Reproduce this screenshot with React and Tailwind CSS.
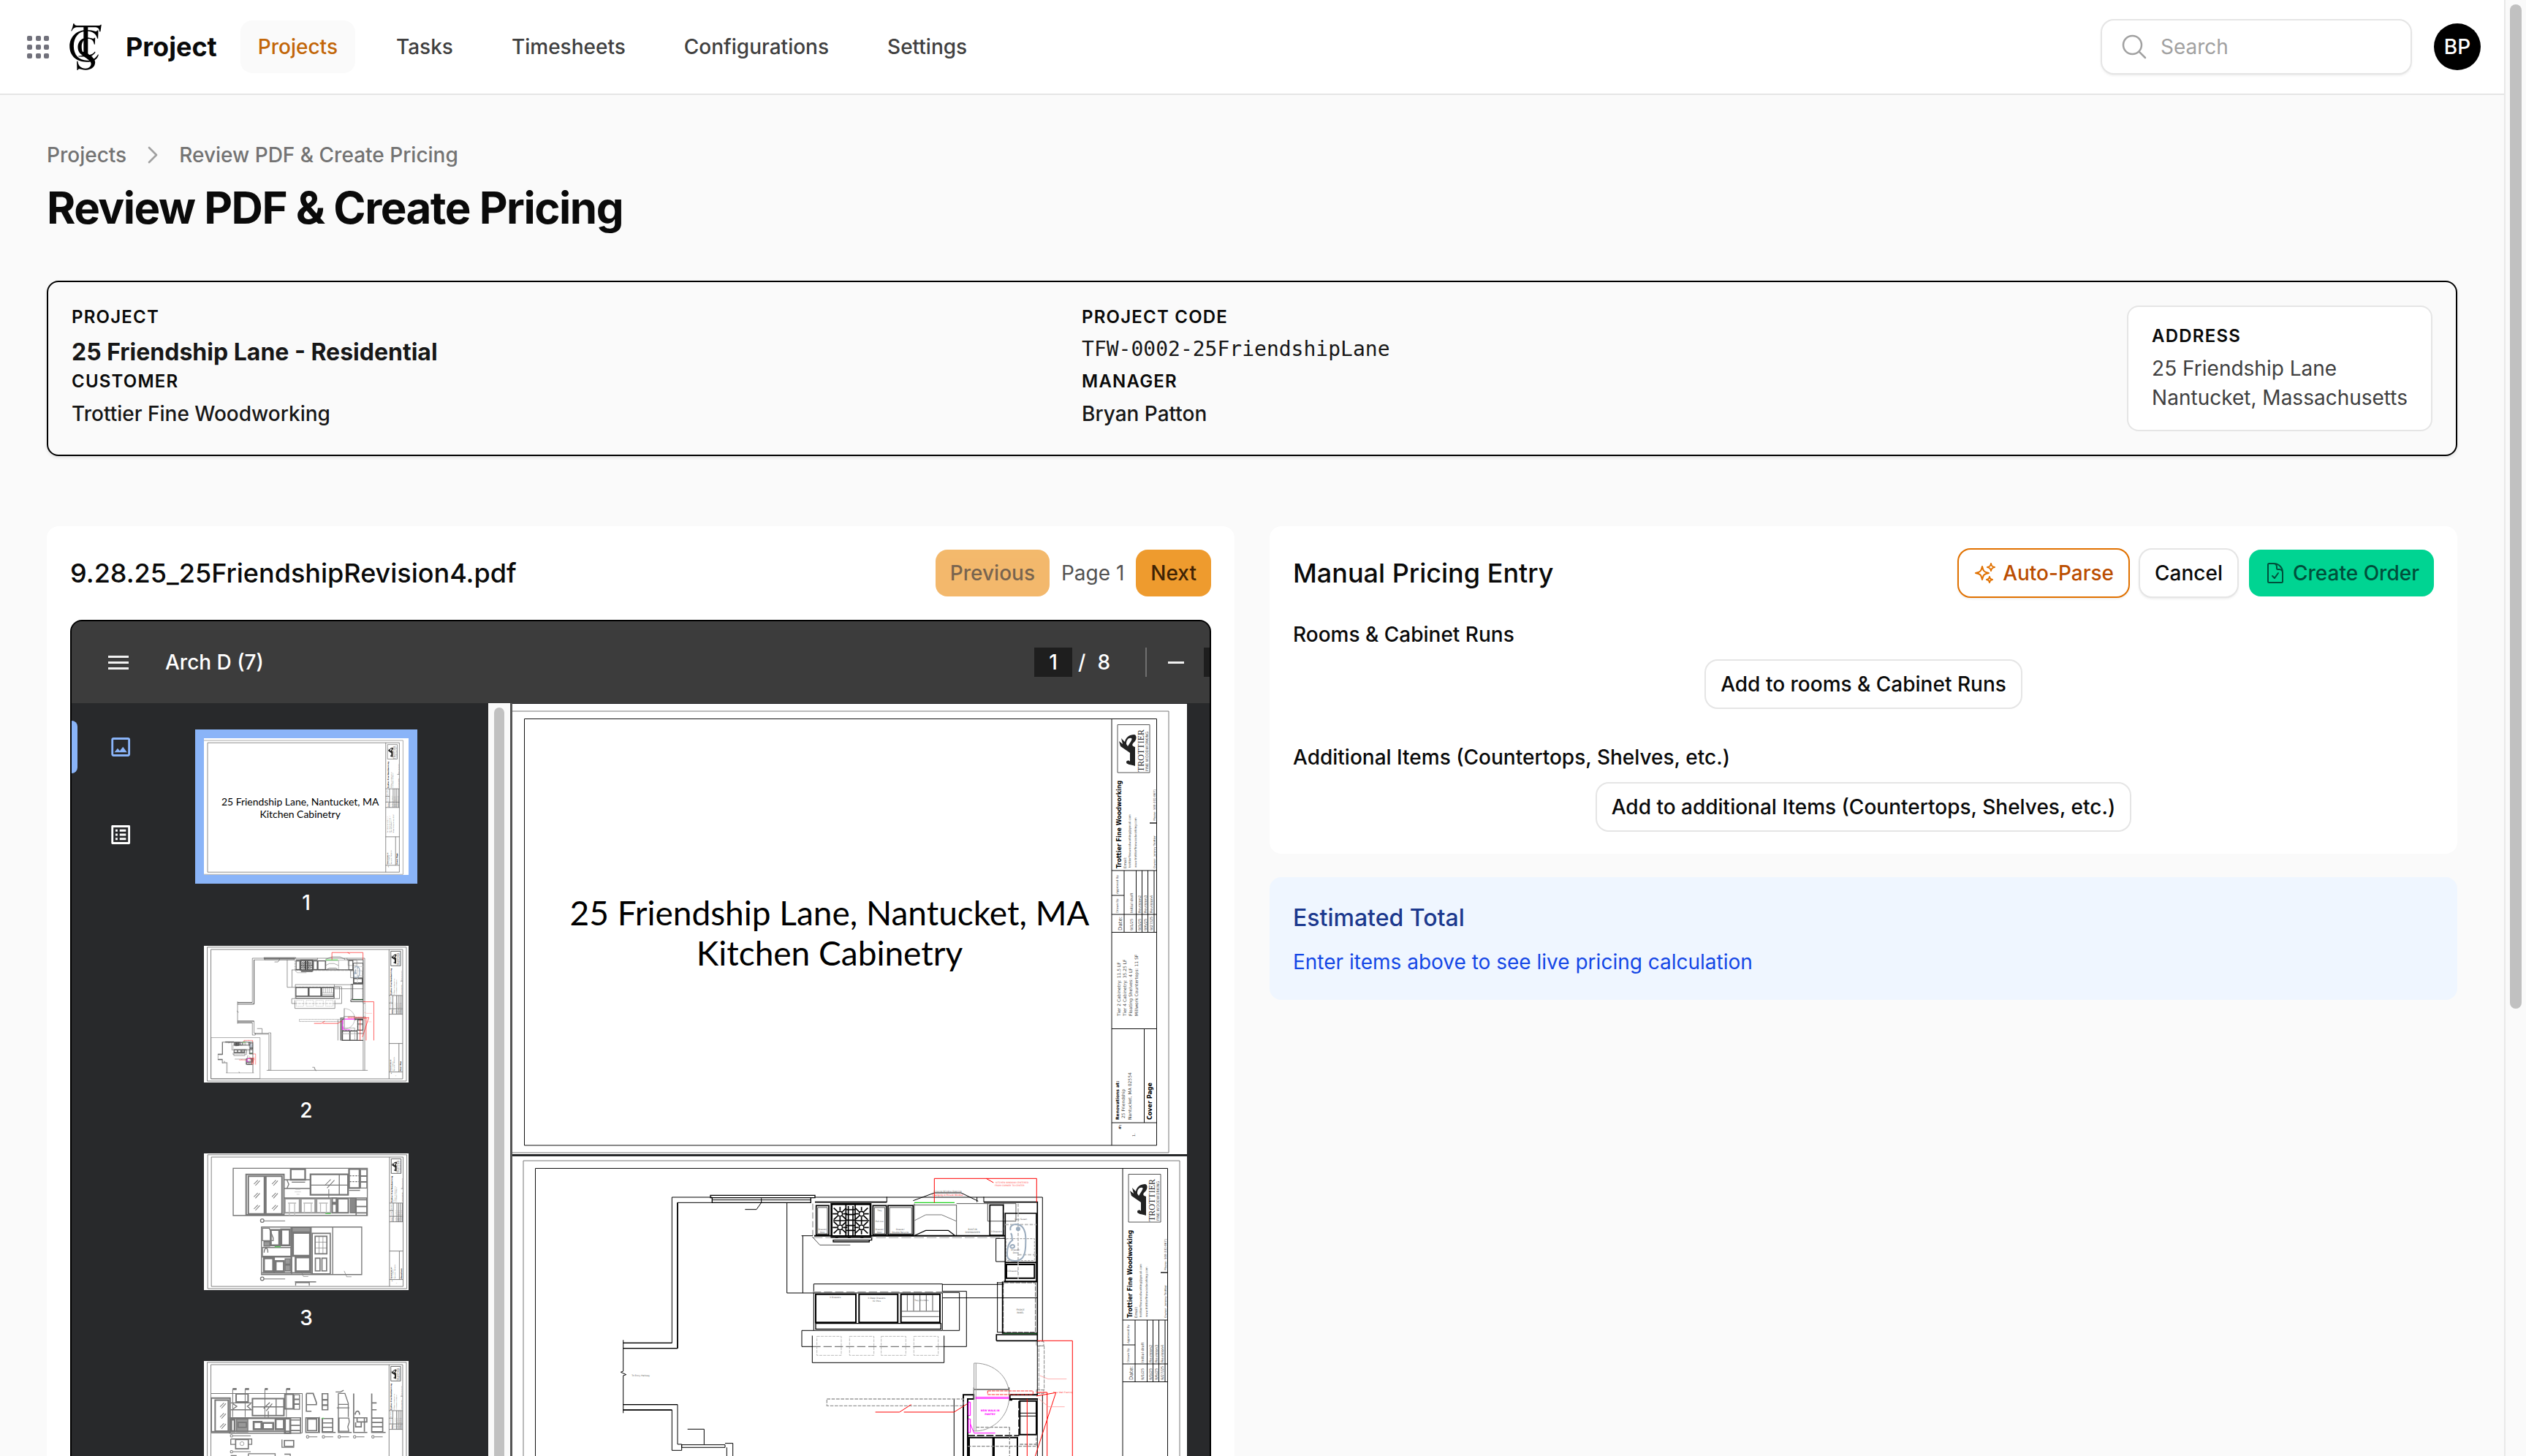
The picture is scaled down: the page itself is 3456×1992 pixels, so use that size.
import React from "react";
import {
  HiOutlineSparkles,
  HiOutlineDocumentCheck,
  HiOutlineMagnifyingGlass,
  HiOutlineChevronRight,
} from "react-icons/hi2";
import { MdOutlineImage, MdOutlineListAlt } from "react-icons/md";

const box = (x1, y1, x2, y2) => `M${x1} ${y1}H${x2}V${y2}H${x1}Z`;
const boxes = (list) => list.map((b) => box(b[0], b[1], b[2], b[3])).join("");

/* ---------- drawing sheets ---------- */

function Side({ x, y, size, bold, fill = "#444", children }) {
  return (
    <text
      transform={`translate(${x} ${y}) rotate(-90)`}
      fontSize={size}
      fontWeight={bold ? 700 : 400}
      fill={bold ? "#000" : fill}
      fontFamily='"DejaVu Sans", sans-serif'
    >
      {children}
    </text>
  );
}

function SheetFrame({ stroke, width, quantities, name, number }) {
  return (
    <g>
      <g fill="none" stroke={stroke} strokeWidth={width}>
        <path d="M701 973H1599V1577H701" stroke="#777" />
        <path d={box(717.5, 983.5, 1582.5, 1567)} />
        <path d="M1521 983.5V1567" />
        <path d="M1521 1191H1582.5M1521 1275.5H1582.5M1521 1407.5H1582.5M1521 1536H1582.5M1565.5 1407.5V1536" />
        <path d="M1521 1251H1582.5M1521 1225H1538M1538 1191V1275M1554.5 1191V1275M1562.5 1191V1275M1570.5 1191V1275M1579 1191V1275" />
        <path d={box(1529, 991.5, 1573, 1057)} stroke="#555" />
      </g>
      <path
        d="M1553 1048C1547 1046 1541 1046 1541 1043C1541 1040 1545 1040 1546 1042L1546 1030L1533 1021L1531 1014L1536 1018L1534 1010L1539 1015C1540 1009 1545 1005 1552 1005C1556 1006 1555 1013 1551 1016C1548 1019 1549 1021 1553 1022Z"
        fill="#222"
      />
      <path d="M1541 1018C1541 1012 1544 1009 1548 1010C1550 1011 1546 1016 1543 1021Z" fill="#fff" />
      <text
        transform="translate(1565 1056) rotate(-90)"
        fontSize="12"
        fontWeight="400"
        fill="#333"
        fontFamily='"Liberation Serif", serif'
      >
        TROTTIER
      </text>
      <Side x={1571} y={1055} size={5}>FINE WOODWORKING</Side>
      <Side x={1534} y={1188} size={8} bold>Trottier Fine Woodworking</Side>
      <Side x={1541} y={1188} size={5}>Email:</Side>
      <Side x={1547} y={1187} size={4}>trottierfinewoodworking@gmail.com</Side>
      <Side x={1555} y={1187} size={4}>www.trottierfinewoodworking.com</Side>
      <Side x={1581} y={1188} size={4}>Owner: Jeremy Trottier</Side>
      <Side x={1581} y={1123} size={4}>Phone: 508-332-8671</Side>
      <path d="M1573 1126H1582" stroke="#555" strokeWidth="2" />
      <Side x={1530} y={1249} size={4}>Drawn By:</Side>
      <Side x={1530} y={1223} size={4}>Approved By:</Side>
      <Side x={1535} y={1273} size={7}>Date:</Side>
      <Side x={1550} y={1273} size={5}>9/1/25</Side>
      <Side x={1550} y={1249} size={5}>Initial draft</Side>
      <Side x={1561} y={1273} size={5}>9/3/25</Side>
      <Side x={1561} y={1249} size={5}>Revision2</Side>
      <Side x={1569} y={1273} size={5}>9/6/25</Side>
      <Side x={1569} y={1249} size={5}>Revision3</Side>
      <Side x={1577} y={1273} size={5}>9/27/25</Side>
      <Side x={1577} y={1249} size={5}>Revision4</Side>
      {quantities && (
        <g>
          <Side x={1533} y={1390} size={6}>Tier 2 Cabinetry: 11.5 LF</Side>
          <Side x={1541} y={1390} size={6}>Tier 4 Cabinetry: 35.25 LF</Side>
          <Side x={1549} y={1390} size={6}>Floating Shelves: 4 LF</Side>
          <Side x={1557} y={1390} size={6}>Millwork Countertops: 11 SF</Side>
        </g>
      )}
      <Side x={1531} y={1532} size={6} bold>Renovations at:</Side>
      <Side x={1539} y={1530} size={6}>25 Friendship</Side>
      <Side x={1548} y={1532} size={6}>Nantucket, MA 02554</Side>
      <Side x={1576} y={1532} size={8} bold>{name}</Side>
      <Side x={1534} y={1545} size={5} bold>#:</Side>
      <Side x={1553} y={1555} size={5}>{number}</Side>
    </g>
  );
}

function CoverSheet({ width = 1, stroke = "#111" }) {
  return (
    <svg viewBox="701 963 923 616" className="block w-full bg-white" role="img" aria-label="Cover page">
      <SheetFrame stroke={stroke} width={width} quantities name="Cover Page" number="1." />
      <g fontFamily="Lato, sans-serif" fontSize="46" fontWeight="400" textAnchor="middle" fill="#000">
        <text x="1135" y="1266">25 Friendship Lane, Nantucket, MA</text>
        <text x="1135" y="1321">Kitchen Cabinetry</text>
      </g>
    </svg>
  );
}

function Burner({ x, y }) {
  return (
    <g stroke="#000" strokeWidth="5" fill="none">
      <circle cx={x} cy={y} r="10" />
      <path d={`M${x - 26} ${y - 24}L${x - 9} ${y - 8}M${x + 26} ${y - 24}L${x + 9} ${y - 8}M${x - 26} ${y + 24}L${x - 9} ${y + 8}M${x + 26} ${y + 24}L${x + 9} ${y + 8}`} />
      <path d={`M${x} ${y - 28}V${y - 13}M${x} ${y + 28}V${y + 13}M${x - 30} ${y}H${x - 13}M${x + 30} ${y}H${x + 13}`} />
    </g>
  );
}

function Note({ x, y, size = 9, fill = "#555", bold, children }) {
  return (
    <text x={x} y={y} fontSize={size} fill={fill} textAnchor="middle" fontWeight={bold ? 700 : 400} fontFamily='"DejaVu Sans", sans-serif'>
      {children}
    </text>
  );
}

/* Kitchen floor plan; one unit is a third of a sheet pixel. */
function FloorPlan({ ink = "#000", k = 1, notes }) {
  return (
    <g fill="none" stroke={ink} strokeWidth={3 * k}>
      {/* outer walls */}
      <path d="M-347 114H-512V712H-712M-712 734H-489V136H-347M75 114H1009V703M-712 700V828L-722 832L-700 842L-712 846V1000M-712 965H-489V1128M-712 987H-512V1153H-472V1128H-489" />
      <path d="M-489 136V734M75 134H370M768 134H988V703" strokeWidth={5 * k} />
      <path d="M-712 712H-512M-712 734H-489M-712 965H-489M-712 987H-512" strokeWidth={4 * k} />
      <path d={boxes([[-354, 106, 75, 116], [-347, 116, 58, 136]])} strokeWidth={4 * k} />
      <path d="M-347 125H58M-145 118V136L-165 164H-212" />
      <path d="M-472 1130H-294V1141H-472ZM-294 1124H-262V1631M-287 1141V1631M-380 1128V1066H-448" />
      <path d="M-318 1631H1050M-287 1620V1631M1009 925V1631M988 940V1631M350 1640L340 1615L330 1618V1590H300" />
      {/* back counter */}
      <path d="M66 140V272M849 140V272" strokeDasharray="26 10" stroke="#777" />
      <path d="M72 272H855" strokeWidth={6 * k} />
      <path d={boxes([[80, 148, 132, 268], [313, 148, 368, 268], [375, 148, 478, 268], [793, 146, 848, 270]])} strokeWidth={5 * k} />
      <path d={boxes([[86, 156, 126, 264], [319, 156, 362, 264], [381, 156, 472, 264]])} strokeWidth={2 * k} />
      <path d="M483 146H656V272M483 140V270M656 140H900V212H784V140" strokeWidth={2 * k} />
      <path d={box(143, 142, 303, 274)} fill="#fff" strokeWidth={8 * k} />
      <path d="M202 144V272M240 144V272M212 150V270M231 150V270M202 165H240M202 185H240M202 208H240M202 230H240M202 250H240M150 210H200M242 210H298" strokeWidth={5 * k} />
      <Burner x={178} y={182} />
      <Burner x={266} y={182} />
      <Burner x={178} y={238} />
      <Burner x={266} y={238} />
      <path d="M140 280H308V290H150V297H298V290" strokeWidth={4 * k} />
      <path d="M66 280H855" strokeDasharray="40 12" stroke="#777" strokeWidth={2 * k} />
      <path d="M64 276L95 310H220" strokeWidth={2 * k} />
      <path d="M370 112V134M768 112V134M740 114V134M478 128L565 96H675L745 130" />
      <path d="M483 210L530 186H595L655 212" stroke="#777" />
      <path d="M486 270L530 250H622L648 270" strokeWidth={4 * k} />
      <path d="M483 136H648" stroke="#1fd21f" strokeWidth={4 * k} />
      {/* dimensions */}
      <path d="M25 272V507M-40 136V507M-40 507H72M66 272H20M70 470V500M598 470H70M598 472H850M598 527H988M668 505V661M600 505H668M697 500V727M600 500H697M600 661H668M605 727H697M21 661V727H66M21 661H70M64 682V793H605V682M824 462V668M818 283V378M818 283H855M818 378H855M646 942V1226" />
      <path d="M598 470V505M822 465H850M822 668H850" />
      <path d="M64 727H604" strokeDasharray="34 12" strokeWidth={2 * k} />
      {/* island */}
      <path d={box(70, 507, 598, 661)} strokeWidth={3 * k} />
      <path d="M66 503H600" strokeDasharray="34 12" stroke="#777" />
      <path d={boxes([[78, 512, 243, 628], [256, 512, 415, 628], [428, 512, 588, 628]])} strokeWidth={6 * k} />
      <path d="M78 632H592V655H78Z" strokeWidth={4 * k} />
      <path d="M454 515V580M480 515V580M506 515V580M532 515V580M558 515V580M432 582H584M432 604H584" strokeWidth={2 * k} />
      <path d={boxes([[83, 685, 183, 763], [217, 685, 317, 763], [347, 685, 448, 763], [481, 685, 581, 763]])} stroke="#999" strokeWidth={2 * k} strokeDasharray="12 4" />
      {/* right run */}
      <path d={box(856, 180, 984, 460)} strokeWidth={5 * k} />
      <path d={box(861, 390, 976, 446)} strokeWidth={6 * k} />
      <path d={box(860, 284, 976, 374)} stroke="#999" strokeDasharray="10 4" />
      <path d="M856 382H984M850 460H988" strokeWidth={6 * k} />
      <path d="M909 140V450M856 226H984M909 350H984" stroke="#bbb" strokeDasharray="14 6" strokeWidth={5 * k} />
      <path d="M878 250C872 230 892 222 908 226C936 232 942 262 940 300C940 345 932 370 906 374C880 378 862 370 864 345C864 322 870 300 886 290C880 278 888 268 878 262M876 318C880 306 894 306 894 316C894 324 880 324 876 318" stroke="#9aabbd" strokeWidth={6 * k} />
      <circle cx="909" cy="244" r="9" fill="#9aabbd" stroke="none" />
      <path d="M848 465V668H980V465Z" strokeWidth={2 * k} strokeDasharray="20 4" />
      <path d="M845 460V672H988M820 678H988M820 703H988M820 676V703" strokeWidth={5 * k} />
      <path d="M848 674H988" stroke="#0b5d1b" strokeWidth={3 * k} />
      {/* door to the right */}
      <path d={boxes([[984, 706, 1014, 724], [994, 724, 1016, 905], [984, 905, 1014, 920]])} stroke="#888" strokeDasharray="16 4" />
      <path d="M988 703V925" strokeWidth={3 * k} />
      {/* pantry */}
      <path d="M684 1226V925H727V942H702V1226H990M875 925H990M875 942H990M875 925V946H885" strokeWidth={6 * k} />
      <path d="M702 1092H912M912 950V1100" strokeWidth={4 * k} strokeDasharray="30 8" />
      <path d={boxes([[916, 950, 984, 1088], [708, 1100, 806, 1226], [810, 1100, 906, 1226]])} strokeWidth={6 * k} />
      <path d="M916 1000H984M916 1012H984M727 903H872M727 895V925M872 895V925" strokeWidth={3 * k} />
      <path d="M702 1136H984V1090M916 1128H984M874 1058V1226M736 1058H874" stroke="#888" strokeDasharray="14 5" strokeWidth={4 * k} />
      <path d="M728 795H736V925M728 795V1074H736V925M736 795C810 797 872 850 872 925V942C868 1010 812 1070 736 1074" stroke="#999" />
      <path d={box(124, 942, 684, 970)} stroke="#999" strokeDasharray="14 5" strokeWidth={4 * k} />
      <path d="M734 935H872M734 940H872" stroke="#f0f" strokeWidth={3 * k} />
      <path d={boxes([[705, 955, 713, 1010], [705, 1024, 713, 1080]])} stroke="#f0f" />
      <path d="M713 1045L728 1082H815" stroke="#f0f" />
      {/* revision marks */}
      <path d="M565 136V37H985V134M778 37L808 54M988 703H1132V1226M984 915H1028V1226M946 942V1226M984 930L1064 916L978 1180M323 996H422L470 965M440 996H646L700 962" stroke="#f00" />
      <path d={box(784, 909, 970, 924)} stroke="#f33" strokeDasharray="14 3" />
      <path d="M998 846L1032 860H1108M992 940L1034 974H1100" stroke="#f88" strokeWidth={2 * k} />
      {notes && (
        <g stroke="none">
          <Note x={884} y={57} fill="#f55">KITCHEN WINDOW CENTERED</Note>
          <Note x={874} y={69} fill="#f55">FROM CORNER TO CENTER</Note>
          <Note x={620} y={93}>Existing Window Opening</Note>
          <Note x={620} y={107} fill="#f00">Changing to Picture Window</Note>
          <Note x={106} y={249}>Drawer/</Note>
          <Note x={106} y={261}>Door</Note>
          <Note x={340} y={172}>Tray</Note>
          <Note x={340} y={215}>Pull-out</Note>
          <Note x={340} y={249}>Drawer/</Note>
          <Note x={340} y={261}>Door</Note>
          <Note x={425} y={249}>Drawer/</Note>
          <Note x={425} y={261}>Double Recycle</Note>
          <Note x={722} y={249}>BUILT-IN</Note>
          <Note x={722} y={261}>DISHWASHER</Note>
          <Note x={820} y={257}>3 Drawers</Note>
          <Note x={920} y={208}>Lazy Susan</Note>
          <Note x={898} y={333}>Drawer/</Note>
          <Note x={898} y={345}>Door</Note>
          <Note x={886} y={420}>3 Drawers</Note>
          <Note x={158} y={528}>3 Drawers</Note>
          <Note x={328} y={530}>3 Deep Drawers</Note>
          <Note x={328} y={542}>for Pots</Note>
          <Note x={512} y={540}>Tray Dividers</Note>
          <Note x={918} y={580}>FRIDGE</Note>
          <Note x={918} y={592}>PANEL</Note>
          <Note x={794} y={993} size={10} fill="#f0f" bold>NEW WALK-IN</Note>
          <Note x={794} y={1007} size={10} fill="#f0f" bold>PANTRY</Note>
          <Note x={1094} y={919} fill="#f33">New Wall Framing</Note>
          <Note x={-640} y={850}>To Entry Hallway</Note>
        </g>
      )}
    </g>
  );
}

function PlanSheet({ thumb }) {
  const ink = thumb ? "#555" : "#000";
  return (
    <svg viewBox="701 963 923 616" className="block w-full bg-white" role="img" aria-label="Floor plan">
      <g transform="translate(15 -4)">
        <SheetFrame stroke={thumb ? "#777" : "#111"} width={thumb ? 3 : 1} name="Floor Plan" number="2." />
        <path d="M701 973V1577" stroke="#777" strokeWidth={thumb ? 3 : 1} />
      </g>
      <g transform="translate(1090 981) scale(0.3333)">
        <FloorPlan ink={ink} k={thumb ? 2 : 1} notes={!thumb} />
      </g>
      <path d={box(733, 1377, 954, 1562)} fill="none" stroke="#777" strokeWidth={thumb ? 2 : 1} />
      <g transform="translate(830 1386) scale(0.092)">
        <FloorPlan ink={ink} k={5} />
      </g>
    </svg>
  );
}

function glass(points) {
  return points
    .map(([x, y]) => `M${x} ${y + 16}L${x + 16} ${y}M${x + 6} ${y + 22}L${x + 24} ${y + 2}`)
    .join("");
}

function ElevationSheet() {
  return (
    <svg viewBox="701 963 923 616" className="block w-full bg-white" role="img" aria-label="Elevations">
      <g transform="translate(17 -4)">
        <SheetFrame stroke="#777" width={3} name="Elevations" number="3." />
        <path d="M701 973V1577" stroke="#777" strokeWidth="3" />
      </g>
      <g transform="translate(701 943) scale(1.1)" fill="none" stroke="#777" strokeWidth="4">
        <path d={box(120, 79, 670, 273)} />
        <path d={boxes([[173, 104, 328, 270], [182, 112, 248, 266], [254, 112, 320, 266]])} strokeWidth="6" />
        <path d={glass([[205, 128], [205, 180], [205, 230], [279, 128], [279, 180], [279, 230]])} strokeWidth="3" />
        <path d={boxes([[356, 83, 415, 126], [437, 104, 591, 188], [595, 82, 638, 160]])} strokeWidth="7" />
        <path d="M328 126H437M328 162H437M340 126L348 145L340 162M437 148H591M555 104V188M360 136H415M595 170H640" />
        <path d="M495 150L520 125M505 160L535 128M512 165V200" strokeWidth="3" />
        <path d="M597 110H636M597 134H636" strokeDasharray="8 4" />
        <path d={boxes([[642, 84, 668, 110], [642, 112, 668, 134], [642, 136, 668, 160]])} />
        <path d={boxes([[332, 204, 392, 262], [398, 204, 456, 262], [462, 204, 520, 262]])} stroke="#999" strokeWidth="6" />
        <path d="M345 222H378M350 222V273M372 222V273M408 222H446M412 222V262M440 222V262M472 222H508M478 222V262M502 222V262" stroke="#bbb" strokeWidth="4" />
        <path d={boxes([[549, 204, 592, 262], [526, 202, 543, 220], [526, 226, 543, 262]])} strokeWidth="6" />
        <path d={box(600, 202, 622, 262)} fill="#888" />
        <path d="M328 201H670M624 208H668M624 236H668M624 262H668M624 201V273M668 201V273" strokeWidth="5" />
        <path d="M498 265H520" stroke="#5c5" />
        <circle cx="239" cy="294" r="7" />
        <path d="M246 295H333" strokeWidth="3" />
        <path d="M375 166H395M372 176H398M380 186H392" stroke="#bbb" strokeWidth="2" />
        <path d={box(236, 320, 647, 515)} />
        <path d="M240 325H268L284 365V376H240ZM528 320V515M440 320V515M360 320V515M240 404H357V440H240ZM247 425C247 400 264 402 262 425" />
        <path d={boxes([[274, 332, 309, 395], [317, 330, 352, 395], [365, 344, 435, 438], [376, 444, 435, 502], [246, 448, 284, 502], [294, 460, 328, 502]])} strokeWidth="8" />
        <path d={boxes([[362, 322, 436, 340], [333, 450, 354, 472], [333, 476, 354, 500], [246, 380, 270, 398]])} fill="#999" />
        <path d="M238 442H360M238 508H440M288 442V508M358 320V510" strokeWidth="6" />
        <path d="M290 401H315" stroke="#5c5" />
        <path d={boxes([[444, 346, 518, 512], [456, 358, 504, 430], [457, 448, 476, 500], [484, 448, 503, 500]])} strokeWidth="5" />
        <path d="M472 358V430M488 358V430M456 382H504M456 406H504M575 500L586 525M400 505L408 523H428M586 524H605" strokeWidth="2" />
        <circle cx="239" cy="532" r="7" />
        <path d="M246 533H333" strokeWidth="3" />
        <path d="M373 545H460M376 548H432V560M376 548V560" strokeWidth="4" />
      </g>
    </svg>
  );
}

function SectionSheet() {
  return (
    <svg viewBox="701 963 923 616" className="block w-full bg-white" role="img" aria-label="Sections">
      <g transform="translate(15 -4)">
        <SheetFrame stroke="#777" width={3} name="Sections" number="4." />
        <path d="M701 973V1577" stroke="#777" strokeWidth="3" />
      </g>
      <g transform="translate(701 6) scale(1.1)" fill="none" stroke="#777" strokeWidth="4">
        <path d="M30 1003H403V1165M30 1165H403M118 985V1100M169 985V1100M250 985V1100M338 985V1100" strokeWidth="3" />
        <path d="M118 985H134M169 985H185M250 985H262M338 985H354" strokeWidth="8" />
        <path d={boxes([[30, 1022, 107, 1160], [46, 1030, 100, 1158], [132, 1005, 181, 1038], [199, 1024, 328, 1094], [332, 1006, 366, 1066]])} strokeWidth="6" />
        <path d={glass([[66, 1042], [66, 1084], [66, 1126]])} strokeWidth="3" />
        <path d="M110 1042H197M110 1070H197M118 1045L135 1056L118 1068M192 1045L178 1056L192 1068M199 1058H328M296 1024V1094M245 1065L270 1040M255 1075L280 1045M264 1075V1100" />
        <path d={boxes([[370, 1008, 392, 1026], [370, 1028, 392, 1046], [370, 1048, 392, 1068]])} />
        <path d={box(106, 1103, 396, 1166)} strokeWidth="5" />
        <path d={box(134, 1108, 180, 1160)} fill="#999" />
        <path d={boxes([[204, 1120, 236, 1150], [242, 1124, 284, 1150], [294, 1108, 328, 1150], [112, 1110, 126, 1158], [332, 1106, 354, 1166]])} strokeWidth="8" />
        <path d="M356 1112H394M356 1134H394M356 1155H394M140 1122H174V1142H140ZM110 1106H330M110 1158H354" strokeWidth="5" />
        <path d={boxes([[130, 1192, 182, 1230], [330, 1196, 368, 1220]])} strokeWidth="5" />
        <path d="M110 1190H196V1212H182M110 1190V1212H130M320 1192V1224H370M110 1258H134M182 1250H292V1260M330 1252H354V1260M182 1250V1260" />
        <circle cx="156" cy="1209" r="8" strokeWidth="2" />
        <path d="M420 1003H448L461 1040V1049H420M420 1003V1076H441M425 1108H462V1156H425ZM418 1103H470V1163H418ZM416 1163H476M473 1100V1165" strokeWidth="5" />
        <path d={boxes([[485, 1004, 508, 1028], [485, 1030, 508, 1050], [485, 1052, 508, 1070], [486, 1106, 528, 1160]])} strokeWidth="5" />
        <path d="M486 1124H528M486 1142H528M485 1104V1163H540" strokeWidth="5" />
        <path d="M551 1003V1163H606M540 997H560L573 990M551 1003H578L592 1044V1100M553 1048H592M545 1062H596M554 1104H594L596 1120L590 1140L594 1158H554Z" />
        <path d="M614 1003V1163H670M614 1103H658V1160M620 1090C622 1072 638 1070 638 1090M622 1122V1140H645V1118M628 1103H668V1120H628Z" strokeWidth="5" />
        <path d="M688 1003V1163H745M688 1042H708M688 1070H708M688 1104H733V1160H688ZM688 1122H733M688 1140H733" strokeWidth="5" />
        <path d="M484 1105H492" stroke="#5c5" />
        {[425, 490, 555, 618, 693].map((x) => (
          <g key={x} strokeWidth="3">
            <circle cx={x} cy="1181" r="5" />
            <path d={`M${x + 6} 1181H${x + 40}`} />
          </g>
        ))}
        {[1177, 1242].map((y) => (
          <g key={y} strokeWidth="3">
            <circle cx="113" cy={y} r="5" />
            <path d={`M119 ${y}H192`} />
          </g>
        ))}
      </g>
    </svg>
  );
}

/* ---------- header ---------- */

const NAV = ["Projects", "Tasks", "Timesheets", "Configurations", "Settings"];

/* Monogram mark: a crossbar and stem, two nested crescents and a hook. */
function Logo() {
  return (
    <svg viewBox="225 62 138 200" className="h-[66px] w-[46px]" role="img" aria-label="TCS" fill="#000">
      <path d="M237 97L234 96C240 85 242 75 243 66L247 66C248 72 252 74 258 74H345C352 74 356 73 357 70L360 70L356 99L352 99C351 86 345 81 330 81H304V190C304 197 308 199 322 200V203H265V200C280 199 286 197 286 190V81H262C248 81 242 86 237 97Z" />
      <path d="M346 128L343 128C338 108 322 97 298 97C266 97 245 122 245 160C245 196 268 219 300 219C322 219 336 210 346 193L348 195C344 214 325 225 298 225C255 225 228 198 228 160C228 120 258 92 298 92C312 92 326 95 336 98C340 98 342 97 343 94L347 94Z" />
      <path d="M333 152L330 152C327 135 318 129 304 129C286 129 278 143 278 163C278 184 288 196 305 196C318 196 326 192 333 182L335 184C330 196 318 202 302 202C278 202 262 186 262 163C262 140 279 124 302 124C310 124 318 126 324 128C328 128 330 127 330 125L334 125Z" />
      <path d="M262 222C263 240 275 252 294 252C308 252 317 244 317 232C317 214 280 208 278 185L296 180C302 196 334 204 334 226C334 246 318 258 295 258C283 258 274 255 268 254C265 254 263 256 262 259L259 259L258 222Z" />
    </svg>
  );
}

function Header() {
  return (
    <header className="flex h-32 shrink-0 items-center bg-white px-8 shadow-[0_2px_0_#e5e5e5]">
      <button type="button" aria-label="Apps" className="grid w-10 grid-cols-3 gap-[5px] p-[5px]">
        {Array.from({ length: 9 }, (_, i) => (
          <span key={i} className="size-[7px] rounded-[2px] bg-[#71717b]" />
        ))}
      </button>
      <a href="#home" className="ml-[22px] flex items-center gap-8">
        <Logo />
        <span className="text-[36px] leading-10 font-bold text-[#0a0a0a]">Project</span>
      </a>
      <nav className="ml-8 flex gap-8">
        {NAV.map((item, i) => (
          <a
            key={item}
            href={"#" + item.toLowerCase()}
            className={
              "rounded-2xl px-6 py-4 text-[28px] leading-10 font-medium " +
              (i === 0 ? "bg-[#fafafa] text-[#c26608]" : "text-[#404040]")
            }
          >
            {item}
          </a>
        ))}
      </nav>
      <label className="ml-auto flex h-[72px] w-[422px] items-center gap-4 rounded-2xl bg-white px-6 shadow-[0_2px_4px_rgba(0,0,0,0.15)] ring-2 ring-[#e5e5e5]">
        <HiOutlineMagnifyingGlass className="size-10 shrink-0 text-[#a1a1a1]" />
        <input
          type="text"
          aria-label="Search"
          placeholder="Search"
          className="min-w-0 flex-1 bg-transparent text-[28px] leading-10 outline-none placeholder:text-[#a1a1a1]"
        />
      </label>
      <button
        type="button"
        className="ml-8 flex size-16 items-center justify-center rounded-full bg-black text-[28px] font-medium text-white"
      >
        BP
      </button>
    </header>
  );
}

/* ---------- project summary ---------- */

function Field({ label, children }) {
  return (
    <div>
      <dt className="text-[24px] leading-8 font-semibold tracking-wider text-[#0a0a0a] uppercase">{label}</dt>
      <dd className="mt-2 text-[28px] leading-10 text-[#171717]">{children}</dd>
    </div>
  );
}

function Summary() {
  return (
    <section className="mt-16 flex items-start gap-12 rounded-2xl border-2 border-black p-8 shadow-[0_2px_4px_rgba(0,0,0,0.1)]">
      <dl className="grid flex-1 grid-cols-2">
        <Field label="Project">
          <span className="block text-[32px] leading-[48px] font-bold">25 Friendship Lane - Residential</span>
        </Field>
        <Field label="Project Code">
          <span className="block font-['DejaVu_Sans_Mono',monospace]">TFW-0002-25FriendshipLane</span>
        </Field>
        <Field label="Customer">
          <span className="font-medium">Trottier Fine Woodworking</span>
        </Field>
        <Field label="Manager">
          <span className="font-medium">Bryan Patton</span>
        </Field>
      </dl>
      <address className="rounded-2xl border-2 border-[#e5e5e5] bg-white px-8 py-6 not-italic">
        <h2 className="text-[24px] leading-8 font-semibold tracking-wider text-[#0a0a0a] uppercase">Address</h2>
        <p className="mt-2 text-[28px] leading-10 text-[#404040]">
          25 Friendship Lane
          <br />
          Nantucket, Massachusetts
        </p>
      </address>
    </section>
  );
}

/* ---------- PDF viewer ---------- */

const THUMBS = [
  { n: 1, art: <CoverSheet width={2} stroke="#444" /> },
  { n: 2, art: <PlanSheet thumb /> },
  { n: 3, art: <ElevationSheet /> },
  { n: 4, art: <SectionSheet /> },
];

function PdfViewer() {
  return (
    <div className="mt-8 flex h-[1400px] flex-col overflow-hidden rounded-2xl border-2 border-black bg-[#28292b] font-medium text-white">
      <div className="flex h-28 shrink-0 items-center bg-[#3c3c3c] pl-[50px] text-[28px] leading-10">
        <button type="button" aria-label="Menu" className="mr-[50px] flex w-7 flex-col gap-[5px]">
          <span className="h-[3px] bg-[#f1f1f1]" />
          <span className="h-[3px] bg-[#f1f1f1]" />
          <span className="h-[3px] bg-[#f1f1f1]" />
        </button>
        <span>Arch D (7)</span>
        <input
          type="text"
          aria-label="Page number"
          defaultValue="1"
          className="ml-auto h-10 w-[52px] bg-[#1e1e1e] text-center outline-none"
        />
        <span className="ml-2">/</span>
        <span className="ml-4">8</span>
        <span className="ml-12 h-10 w-0.5 bg-[#6f6f6f]" />
        <button type="button" aria-label="Zoom out" className="ml-[26px] flex h-10 w-7 items-center justify-center">
          <span className="h-[3px] w-[22px] bg-[#f1f1f1]" />
        </button>
        <span className="ml-6 h-10 w-2 bg-[#1e1e1e]" />
      </div>
      <div className="flex min-h-0 flex-1">
        <div className="flex w-[570px] shrink-0">
          <div className="flex w-[84px] flex-col gap-12 pt-6">
            <button type="button" aria-label="Thumbnails" className="flex h-[72px] items-center gap-[42px] text-[#8ab4f8]">
              <span className="h-full w-2 rounded-r-lg bg-[#8ab4f8]" />
              <MdOutlineImage className="size-9" />
            </button>
            <button type="button" aria-label="Document outline" className="flex h-[72px] items-center gap-[42px]">
              <span className="h-full w-2" />
              <MdOutlineListAlt className="size-9" />
            </button>
          </div>
          <ol className="ml-[85px] pt-9">
            {THUMBS.map(({ n, art }) => (
              <li key={n} className="mb-[21px]">
                <button type="button" className="block w-[304px]">
                  <span className={"block border-12 " + (n === 1 ? "border-[#8ab4f8]" : "border-transparent")}>{art}</span>
                  <span className="block text-center text-[28px] leading-[52px]">{n}</span>
                </button>
              </li>
            ))}
          </ol>
        </div>
        <div className="w-[30px] shrink-0 bg-[#fafafa] px-2 pt-1.5">
          <div className="h-[1200px] rounded-full bg-[#c1c1c1]" />
        </div>
        <div className="w-[3px] shrink-0 bg-[#555]" />
        <div className="mr-[31px] flex-1 space-y-[3px] pt-px">
          <CoverSheet />
          <PlanSheet />
        </div>
      </div>
    </div>
  );
}

function PdfPanel() {
  return (
    <section className="rounded-2xl bg-white p-8">
      <div className="flex items-center gap-4 text-[28px] leading-10">
        <h2 className="flex-1 text-[36px] font-medium text-[#0a0a0a]">9.28.25_25FriendshipRevision4.pdf</h2>
        <button type="button" disabled className="h-16 rounded-2xl bg-[#ee9b2e] px-5 font-medium text-[#3f2305] opacity-70">
          Previous
        </button>
        <span className="text-[#525252]">Page 1</span>
        <button type="button" className="h-16 rounded-2xl bg-[#ee9b2e] px-5 font-medium text-[#3f2305]">
          Next
        </button>
      </div>
      <PdfViewer />
    </section>
  );
}

/* ---------- pricing ---------- */

function AddRow({ title, action }) {
  return (
    <div className="flex flex-col items-center">
      <h3 className="self-stretch text-[28px] leading-10 font-medium text-[#0a0a0a]">{title}</h3>
      <button
        type="button"
        className="mt-4 h-16 rounded-2xl bg-white px-5 text-[28px] font-medium text-[#0a0a0a] ring-2 ring-[#e5e5e5]"
      >
        {action}
      </button>
    </div>
  );
}

function PricingPanel() {
  return (
    <section className="flex flex-col gap-8">
      <div className="rounded-2xl bg-white p-8">
        <div className="flex items-center gap-4 text-[28px] leading-10 font-medium">
          <h2 className="flex-1 text-[36px] text-[#0a0a0a]">Manual Pricing Entry</h2>
          <button
            type="button"
            className="flex h-16 items-center gap-2 rounded-2xl bg-white px-5 text-[#bb4d00] shadow-[0_2px_4px_rgba(0,0,0,0.15)] ring-2 ring-[#e17100]"
          >
            <HiOutlineSparkles className="size-8 text-[#e17100]" />
            Auto-Parse
          </button>
          <button
            type="button"
            className="h-16 rounded-2xl bg-white px-5 text-[#0a0a0a] shadow-[0_2px_4px_rgba(0,0,0,0.15)] ring-2 ring-[#e5e5e5]"
          >
            Cancel
          </button>
          <button type="button" className="flex h-16 items-center gap-2 rounded-2xl bg-[#00d492] px-5 text-[#004f3b]">
            <HiOutlineDocumentCheck className="size-8" />
            Create Order
          </button>
        </div>
        <div className="mt-8 flex flex-col gap-12">
          <AddRow title="Rooms & Cabinet Runs" action="Add to rooms & Cabinet Runs" />
          <AddRow
            title="Additional Items (Countertops, Shelves, etc.)"
            action="Add to additional Items (Countertops, Shelves, etc.)"
          />
        </div>
      </div>
      <div className="rounded-2xl bg-[#eff6ff] p-8">
        <h2 className="text-[32px] leading-[48px] font-medium text-[#1c398e]">Estimated Total</h2>
        <p className="mt-4 text-[28px] leading-10 text-[#1447e6]">Enter items above to see live pricing calculation</p>
      </div>
    </section>
  );
}

export default function App() {
  return (
    <div className="flex h-screen overflow-hidden bg-[#fafafa] font-['Inter',sans-serif] text-[#0a0a0a]">
      <div className="flex min-w-0 flex-1 flex-col">
        <Header />
        <main className="px-16 pt-16">
          <nav aria-label="Breadcrumb" className="flex items-center gap-4 text-[28px] leading-10 font-medium text-[#737373]">
            <a href="#projects">Projects</a>
            <HiOutlineChevronRight className="size-10 p-1 text-[#a1a1a1]" strokeWidth={2} />
            <a href="#review">Review PDF & Create Pricing</a>
          </nav>
          <h1 className="mt-4 text-[60px] leading-[72px] font-bold tracking-tight">Review PDF & Create Pricing</h1>
          <Summary />
          <div className="mt-24 grid grid-cols-2 items-start gap-12">
            <PdfPanel />
            <PricingPanel />
          </div>
        </main>
      </div>
      <div className="w-[30px] shrink-0 border-l-2 border-[#e8e8e8] bg-[#fafafa] px-1.5 pt-1.5">
        <div className="h-[69vh] rounded-full bg-[#c1c1c1]" />
      </div>
    </div>
  );
}
